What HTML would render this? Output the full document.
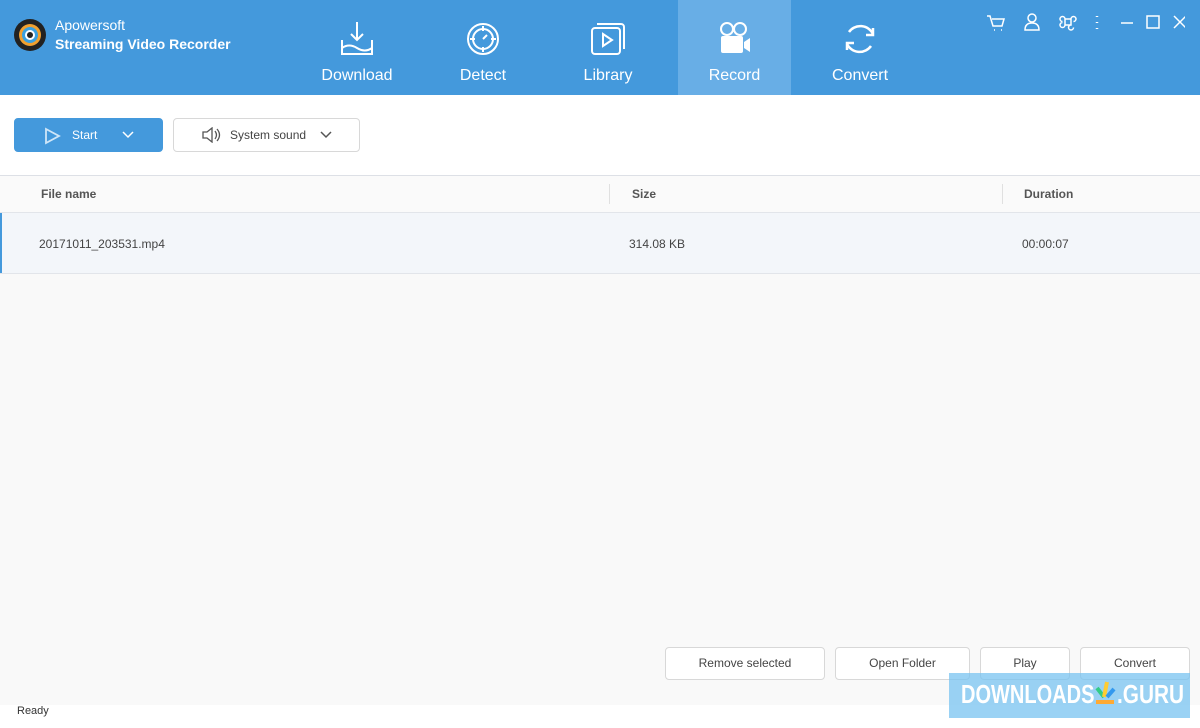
<!DOCTYPE html><html><head><style>
body{margin:0;width:1200px;height:728px;overflow:hidden;font-family:"Liberation Sans",sans-serif;background:#f9f9f9;position:relative}
.hd{position:absolute;left:0;top:0;width:1200px;height:95px;background:#4499dc}
.tab{position:absolute;top:0;height:95px;color:#fff;font-size:16px;text-align:center}
.tab span{position:absolute;top:67px;left:0;right:0}
.tab svg{position:absolute;top:20px;left:50%;margin-left:-19px}
.btn{position:absolute;border:1px solid #d8d8d8;border-radius:4px;background:#fff;font-size:12px;color:#444;text-align:center;box-sizing:border-box}
.th{position:absolute;font-size:12px;font-weight:bold;color:#555;top:187px}
.td{position:absolute;font-size:12px;color:#444;top:237px}
.wm{position:absolute;top:679px;font-size:26px;font-weight:bold;color:#fff;transform:scaleX(.8);transform-origin:left}
</style></head><body>
<div class="hd"></div>
<svg style="position:absolute;left:13px;top:18px" width="34" height="34"><circle cx="17" cy="17" r="16" fill="#222"/><circle cx="17" cy="17" r="11" fill="#f0a030"/><circle cx="17" cy="17" r="8" fill="#3aa0e0"/><circle cx="17" cy="17" r="5" fill="#fff"/><circle cx="17" cy="17" r="3" fill="#222"/></svg>
<div style="position:absolute;left:55px;top:17px;color:#fff;font-size:14px">Apowersoft</div>
<div style="position:absolute;left:55px;top:36px;color:#fff;font-size:14px;font-weight:bold">Streaming Video Recorder</div>
<div class="tab" style="left:300px;width:114px"><svg width="38" height="38" fill="none" stroke="#fff" stroke-width="2"><path d="M19 2v18M13 14l6 6 6-6M4 20v14h30V20M4 28q7-5 15 0t15 0"/></svg><span>Download</span></div>
<div class="tab" style="left:426px;width:114px"><svg width="38" height="38" fill="none" stroke="#fff" stroke-width="2"><circle cx="19" cy="19" r="15"/><circle cx="19" cy="19" r="10"/><path d="M19 6v5M19 27v5M6 19h5M27 19h5M19 19l4-4"/></svg><span>Detect</span></div>
<div class="tab" style="left:551px;width:114px"><svg width="38" height="38" fill="none" stroke="#fff" stroke-width="2"><rect x="3" y="8" width="28" height="26" rx="3"/><path d="M8 4h24a3 3 0 0 1 3 3v22"/><path d="M14 14l9 6-9 6z"/></svg><span>Library</span></div>
<div class="tab" style="left:678px;width:113px;background:#68aee6"><svg width="38" height="38" fill="#fff"><circle cx="11" cy="9" r="6" fill="none" stroke="#fff" stroke-width="2"/><circle cx="24" cy="9" r="6" fill="none" stroke="#fff" stroke-width="2"/><rect x="5" y="16" width="22" height="17" rx="2"/><path d="M28 22l6-4v14l-6-4z"/></svg><span>Record</span></div>
<div class="tab" style="left:803px;width:114px"><svg width="38" height="38" fill="none" stroke="#fff" stroke-width="2.5"><path d="M8 12A14 14 0 0 1 32 14M30 26A14 14 0 0 1 6 24M32 8v7h-7M6 30v-7h7"/></svg><span>Convert</span></div>
<svg style="position:absolute;left:985px;top:13px" width="200" height="20" fill="none" stroke="#fff" stroke-width="1.5"><path d="M2 3h3l3 10h9l2-7H7M9 17h1M16 17h1"/><circle cx="47" cy="5" r="4"/><path d="M40 17q0-7 7-7t7 7z"/><path d="M80 6h6v6h-6zM80 6a2.5 2.5 0 1 0-2.5 2.5M86 6a2.5 2.5 0 1 1 2.5 2.5M80 12a2.5 2.5 0 1 1-2.5-2.5M86 12a2.5 2.5 0 1 0 2.5 2.5"/><path d="M112 3v1M112 9v1M112 15v1" stroke-width="2.5"/><path d="M136 10h12"/><rect x="162" y="3" width="12" height="12"/><path d="M189 3l12 12M201 3l-12 12"/></svg>
<div style="position:absolute;left:0;top:95px;width:1200px;height:80px;background:#fff;border-bottom:1px solid #dde0e6"></div>
<div class="btn" style="left:14px;top:118px;width:149px;height:34px;background:#4499dc;border-color:#4499dc;color:#fff;line-height:32px;text-align:left"><svg style="position:absolute;left:28px;top:8px" width="18" height="18" fill="none" stroke="#cfe6f8" stroke-width="1.8"><path d="M3 2l13 7-13 7z"/></svg><span style="position:absolute;left:57px">Start</span><svg style="position:absolute;left:107px;top:12px" width="12" height="8" fill="none" stroke="#fff" stroke-width="1.5"><path d="M1 1l5 5 5-5"/></svg></div>
<div class="btn" style="left:173px;top:118px;width:187px;height:34px;line-height:32px;text-align:left"><svg style="position:absolute;left:27px;top:8px" width="20" height="16" fill="none" stroke="#555" stroke-width="1.3"><path d="M2 5h4l5-4v14l-5-4H2zM14 4q3 4 0 8M16 2q5 6 0 12"/></svg><span style="position:absolute;left:56px">System sound</span><svg style="position:absolute;left:146px;top:12px" width="12" height="8" fill="none" stroke="#555" stroke-width="1.5"><path d="M1 1l5 5 5-5"/></svg></div>
<div style="position:absolute;left:0;top:176px;width:1200px;height:36px;background:#fafafa;border-bottom:1px solid #e2e5ea"></div>
<div style="position:absolute;left:609px;top:184px;width:1px;height:20px;background:#e0e0e0"></div>
<div style="position:absolute;left:1002px;top:184px;width:1px;height:20px;background:#e0e0e0"></div>
<div class="th" style="left:41px">File name</div><div class="th" style="left:632px">Size</div><div class="th" style="left:1024px">Duration</div>
<div style="position:absolute;left:0;top:213px;width:1200px;height:60px;background:#f3f6fa;border-bottom:1px solid #e2e5ea"></div>
<div style="position:absolute;left:0;top:213px;width:2px;height:60px;background:#4499dc"></div>
<div class="td" style="left:39px">20171011_203531.mp4</div><div class="td" style="left:629px">314.08 KB</div><div class="td" style="left:1022px">00:00:07</div>
<div class="btn" style="left:665px;top:647px;width:160px;height:33px;line-height:31px">Remove selected</div>
<div class="btn" style="left:835px;top:647px;width:135px;height:33px;line-height:31px">Open Folder</div>
<div class="btn" style="left:980px;top:647px;width:90px;height:33px;line-height:31px">Play</div>
<div class="btn" style="left:1080px;top:647px;width:110px;height:33px;line-height:31px">Convert</div>
<div style="position:absolute;left:0;top:705px;width:1200px;height:23px;background:#fff"></div>
<div style="position:absolute;left:17px;top:705px;font-size:11px;color:#333">Ready</div>
<div style="position:absolute;left:949px;top:673px;width:241px;height:45px;background:rgba(120,195,240,.75)"></div>
<div class="wm" style="left:961px;transform:scaleX(.77)">DOWNLOADS</div>
<div class="wm" style="left:1117px;transform:scaleX(.8)">.GURU</div>
<svg style="position:absolute;left:1093px;top:680px" width="24" height="26"><path d="M4 8l7 9" stroke="#3c8" stroke-width="4"/><path d="M11 17l3-15" stroke="#fc3" stroke-width="4"/><path d="M14 17l7-8" stroke="#39e" stroke-width="4"/><rect x="3" y="20" width="18" height="4" fill="#fa3"/></svg>
</body></html>
